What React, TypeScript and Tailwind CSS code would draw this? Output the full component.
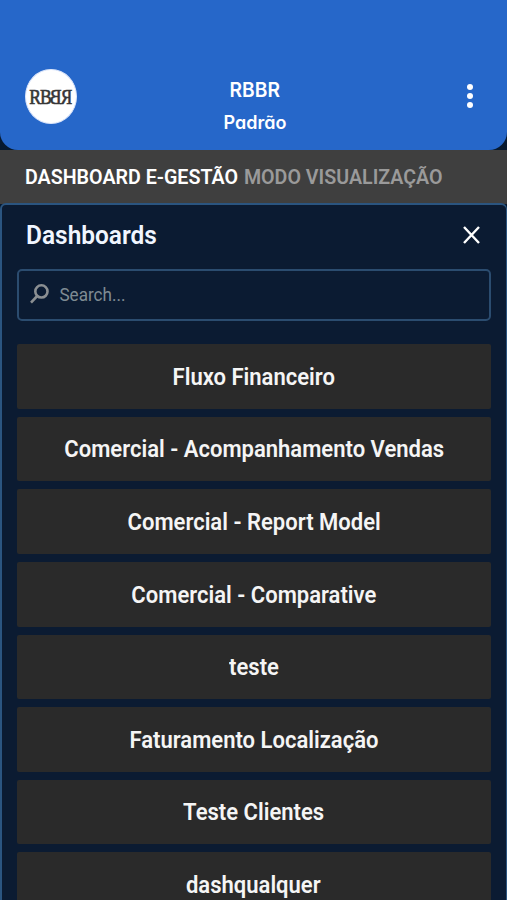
const dashboards = [
  "Fluxo Financeiro",
  "Comercial - Acompanhamento Vendas",
  "Comercial - Report Model",
  "Comercial - Comparative",
  "teste",
  "Faturamento Localização",
  "Teste Clientes",
  "dashqualquer",
];

function Header() {
  return (
    <header className="flex h-[150px] shrink-0 items-start justify-between rounded-b-[18px] bg-[#2667c9] pt-[69px] pr-[27px] pl-[25px] text-white">
      <div className="flex h-[55px] w-[52px] items-center justify-center rounded-[50%] border border-[#dbe5fa] bg-white font-['Liberation_Serif',serif] text-[22px] text-[#333]">
        <span className="flex scale-x-[0.8] tracking-[-1.4px] [-webkit-text-stroke:0.7px_#3a3a3a]">
          <span>RB</span>
          <span className="-scale-x-100">RB</span>
        </span>
      </div>
      <div className="flex w-[200px] flex-col items-center pt-[6px] pr-[28px] pl-[26px] font-['Inter',sans-serif] font-semibold -translate-x-[12.5px] [font-feature-settings:'cv11']">
        <span className="scale-x-[0.96] text-[20px] leading-[30px]">RBBR</span>
        <span className="pt-[3px] text-[18px] leading-[30px]">Padrão</span>
      </div>
      <button className="mt-[15px] flex w-5 flex-col items-center gap-[3px]" aria-label="Menu">
        <span className="size-[6px] rounded-full bg-white" />
        <span className="size-[6px] rounded-full bg-white" />
        <span className="size-[6px] rounded-full bg-white" />
      </button>
    </header>
  );
}

export default function App() {
  return (
    <div className="flex h-[900px] w-[507px] flex-col overflow-hidden bg-[#07192f] font-['Roboto',sans-serif]">
      <Header />
      <div className="h-[54px] shrink-0 bg-[#3f3f3f] pl-[25px]">
        <div className="flex h-full w-max origin-left scale-x-[0.982] items-center gap-[6px] text-[20px] font-semibold whitespace-nowrap">
          <span className="text-white">DASHBOARD E-GESTÃO</span>
          <span className="text-[#9a9a9a]">MODO VISUALIZAÇÃO</span>
        </div>
      </div>
      <main className="-mt-px flex h-[720px] shrink-0 flex-col rounded-t-[6px] border-2 border-r border-[#2b5580] bg-[#0b1b32] pr-[15px] pl-[14.5px]">
        <div className="flex h-[64px] shrink-0 items-center justify-between pr-[11px] pb-[4px] pl-[9.5px]">
          <h1 className="origin-left scale-x-[0.978] pt-[2px] text-[25px] font-semibold text-[#f0f6ff]">Dashboards</h1>
          <svg className="h-[18px] w-[17px]" viewBox="0 0 17 18" fill="none" stroke="white" strokeWidth="2.4">
            <path d="M1 1L16 17M16 1L1 17" />
          </svg>
        </div>
        <div className="flex h-[52px] shrink-0 items-center rounded-[5px] border-2 border-[#2b4c6f] pb-[2px] pl-[11.4px]">
          <svg className="h-[20px] w-[19px]" viewBox="0 0 19 20" fill="none" stroke="#8b8f92" strokeWidth="2.6">
            <circle cx="11.4" cy="7.4" r="6.1" />
            <path d="M7.2 12L1 18.7" />
          </svg>
          <span className="origin-left scale-x-[0.95] pl-[11px] text-[18px] text-[#7f8b93]">Search...</span>
        </div>
        <div className="mt-[23.2px] flex flex-col gap-[8px]">
          {dashboards.map((name) => (
            <button
              key={name}
              className="flex h-[64.6px] shrink-0 items-center justify-center rounded-[2px] bg-[#2a2a2a] pt-[3px] text-[23px] font-semibold whitespace-nowrap text-[#f5f5f5]"
            >
              <span className="scale-x-[0.958]">{name}</span>
            </button>
          ))}
        </div>
      </main>
    </div>
  );
}
